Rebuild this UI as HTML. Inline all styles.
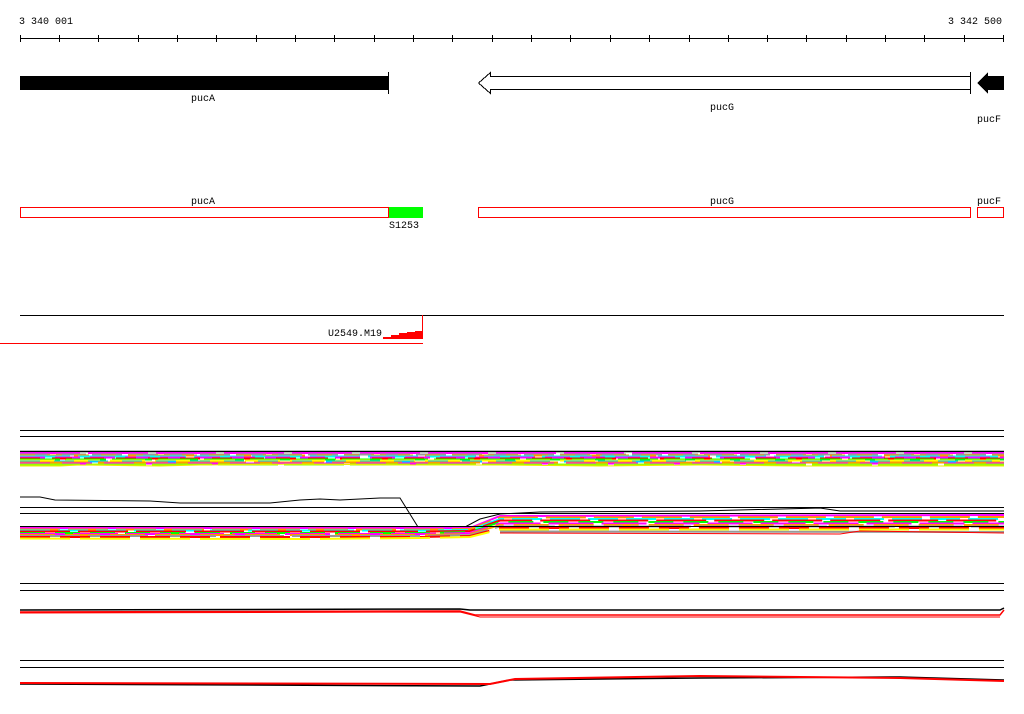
<!DOCTYPE html>
<html><head><meta charset="utf-8"><style>
html,body{margin:0;padding:0;background:#fff;width:1024px;height:714px;overflow:hidden}
svg{display:block}
text{font-family:"Liberation Mono","DejaVu Sans Mono",monospace;font-size:10px;fill:#000}
</style></head><body>
<svg width="1024" height="714" viewBox="0 0 1024 714" shape-rendering="crispEdges">
<text x="19" y="24">3 340 001</text>
<text x="1002" y="24" text-anchor="end">3 342 500</text>
<line x1="20" y1="38.5" x2="1004" y2="38.5" stroke="#000"/>
<g stroke="#000">
<line x1="20.5" y1="35" x2="20.5" y2="42"/><line x1="59.5" y1="35" x2="59.5" y2="42"/><line x1="98.5" y1="35" x2="98.5" y2="42"/><line x1="138.5" y1="35" x2="138.5" y2="42"/><line x1="177.5" y1="35" x2="177.5" y2="42"/><line x1="216.5" y1="35" x2="216.5" y2="42"/><line x1="256.5" y1="35" x2="256.5" y2="42"/><line x1="295.5" y1="35" x2="295.5" y2="42"/><line x1="334.5" y1="35" x2="334.5" y2="42"/><line x1="374.5" y1="35" x2="374.5" y2="42"/><line x1="413.5" y1="35" x2="413.5" y2="42"/><line x1="452.5" y1="35" x2="452.5" y2="42"/><line x1="492.5" y1="35" x2="492.5" y2="42"/><line x1="531.5" y1="35" x2="531.5" y2="42"/><line x1="570.5" y1="35" x2="570.5" y2="42"/><line x1="610.5" y1="35" x2="610.5" y2="42"/><line x1="649.5" y1="35" x2="649.5" y2="42"/><line x1="689.5" y1="35" x2="689.5" y2="42"/><line x1="728.5" y1="35" x2="728.5" y2="42"/><line x1="767.5" y1="35" x2="767.5" y2="42"/><line x1="806.5" y1="35" x2="806.5" y2="42"/><line x1="846.5" y1="35" x2="846.5" y2="42"/><line x1="885.5" y1="35" x2="885.5" y2="42"/><line x1="924.5" y1="35" x2="924.5" y2="42"/><line x1="964.5" y1="35" x2="964.5" y2="42"/><line x1="1003.5" y1="35" x2="1003.5" y2="42"/>
</g>
<rect x="20" y="76" width="368" height="14" fill="#000"/>
<line x1="388.5" y1="72" x2="388.5" y2="94" stroke="#000"/>
<text x="203" y="101" text-anchor="middle">pucA</text>
<path d="M478.5 83 L490.5 72.5 L490.5 76.5 L970.5 76.5 M478.5 83 L490.5 93.5 L490.5 89.5 L970.5 89.5" fill="none" stroke="#000"/>
<line x1="970.5" y1="72" x2="970.5" y2="94" stroke="#000"/>
<text x="722" y="110" text-anchor="middle">pucG</text>
<path d="M977 83 L988 72 L988 76 L1004 76 L1004 90 L988 90 L988 94 Z" fill="#000"/>
<text x="989" y="122" text-anchor="middle">pucF</text>
<text x="203" y="204" text-anchor="middle">pucA</text>
<text x="722" y="204" text-anchor="middle">pucG</text>
<text x="989" y="204" text-anchor="middle">pucF</text>
<rect x="20.5" y="207.5" width="368" height="10" fill="none" stroke="#f00"/>
<rect x="389" y="207" width="34" height="11" fill="#0f0"/>
<rect x="478.5" y="207.5" width="492" height="10" fill="none" stroke="#f00"/>
<rect x="977.5" y="207.5" width="26" height="10" fill="none" stroke="#f00"/>
<text x="389" y="228">S1253</text>
<line x1="20" y1="315.5" x2="1004" y2="315.5" stroke="#000"/>
<line x1="0" y1="343.5" x2="423" y2="343.5" stroke="#f00"/>
<line x1="422.5" y1="315" x2="422.5" y2="339" stroke="#f00"/>
<path d="M383 339 L423 339 L423 331 L415 331 L415 332 L407 332 L407 333 L399 333 L399 335 L391 335 L391 337 L383 337 Z" fill="#f00"/>
<text x="328" y="336">U2549.M19</text>
<g stroke="#000">
<line x1="20" y1="430.5" x2="1004" y2="430.5"/><line x1="20" y1="436.5" x2="1004" y2="436.5"/>
<line x1="20" y1="507.5" x2="1004" y2="507.5"/><line x1="20" y1="513.5" x2="1004" y2="513.5"/>
<line x1="20" y1="583.5" x2="1004" y2="583.5"/><line x1="20" y1="590.5" x2="1004" y2="590.5"/>
<line x1="20" y1="660.5" x2="1004" y2="660.5"/><line x1="20" y1="667.5" x2="1004" y2="667.5"/>
</g>
<g stroke-width="2" shape-rendering="auto">
<line x1="20" y1="451.5" x2="1004" y2="451.5" stroke="#000" stroke-width="1.5"/>
<line x1="20" y1="453" x2="1004" y2="453" stroke="#f0f" stroke-dasharray="60 8"/>
<line x1="20" y1="454.5" x2="1004" y2="454.5" stroke="#999" stroke-dasharray="30 6"/>
<line x1="20" y1="455.5" x2="1004" y2="455.5" stroke="#f90" stroke-dasharray="15 12"/>
<line x1="20" y1="456.5" x2="1004" y2="456.5" stroke="#0ff" stroke-dasharray="50 8"/>
<line x1="20" y1="457.5" x2="1004" y2="457.5" stroke="#f0f" stroke-dasharray="25 10"/>
<line x1="20" y1="458.5" x2="1004" y2="458.5" stroke="#f00" stroke-dasharray="20 12"/>
<line x1="20" y1="459.5" x2="1004" y2="459.5" stroke="#0f0" stroke-dasharray="40 6"/>
<line x1="20" y1="460.5" x2="1004" y2="460.5" stroke="#ff0" stroke-dasharray="35 10"/>
<line x1="20" y1="461.5" x2="1004" y2="461.5" stroke="#0cf" stroke-dasharray="20 14"/>
<line x1="20" y1="462.5" x2="1004" y2="462.5" stroke="#f90" stroke-dasharray="70 8"/>
<line x1="20" y1="463.5" x2="1004" y2="463.5" stroke="#f0f" stroke-dasharray="30 12"/>
<line x1="20" y1="464.5" x2="1004" y2="464.5" stroke="#9f0" stroke-dasharray="60 6"/>
<polyline points="20,466 60,466 80,465 160,466 200,465 300,464 400,465 500,465 600,466 700,465 800,466 900,466 1004,466" fill="none" stroke="#ee0" stroke-width="1"/>
</g>
<g shape-rendering="auto" fill="none">
<polyline points="20,497 40,497 55,500 150,501 180,503 230,503 270,503 300,500 320,499 340,500 380,498 400,498 418,527 465,527 480,519 500,514 540,512 700,511 820,508 840,511 1004,511" stroke="#000"/>
<g stroke-width="2">
<polyline points="20,528 420,528 470,528 500,516 1004,515" stroke="#f0f"/>
<polyline points="20,529.5 420,529.5 470,529 500,517.5 1004,517" stroke="#f90" stroke-dasharray="40 8"/>
<polyline points="20,530.5 420,530.5 470,530 500,519 1004,519" stroke="#0ff" stroke-dasharray="30 8"/>
<polyline points="20,531.5 420,531.5 470,531 500,520.5 1004,520.5" stroke="#f00" stroke-dasharray="50 8"/>
<polyline points="20,533 420,533 470,532 500,522 1004,522" stroke="#0f0" stroke-dasharray="25 10"/>
<polyline points="20,534 420,534 470,533 500,523.5 1004,523.5" stroke="#f0f" stroke-dasharray="45 8"/>
<polyline points="20,535 420,535 470,534 500,525 1004,525" stroke="#f90" stroke-dasharray="35 10"/>
<polyline points="20,536 420,536 470,535 500,526.5 1004,526.5" stroke="#999" stroke-dasharray="60 8"/>
<polyline points="20,537 420,537 470,536 500,528 1004,528" stroke="#f00" stroke-dasharray="30 10"/>
<polyline points="20,538.5 300,539 420,538 470,537 500,529.5 1004,529.5" stroke="#ff0" stroke-dasharray="50 10"/>
<polyline points="20,526.5 1004,526.5" stroke="#000" stroke-width="1"/>
<polyline points="500,531.5 1004,532" stroke="#999"/>
<polyline points="500,533 840,534 860,531 1004,533" stroke="#f00" stroke-width="1"/>
</g>
</g>
<g shape-rendering="auto" fill="none" stroke-width="1.5">
<polyline points="20,610 460,609 470,610 1000,610 1004,608" stroke="#000"/>
<polyline points="20,612 460,611 475,615 700,615 1000,615 1004,610" stroke="#f00"/>
<polyline points="20,613 460,612 480,617 1000,617" stroke="#f00" stroke-width="1"/>
</g>
<g shape-rendering="auto" fill="none" stroke-width="1.5">
<polyline points="20,684 480,686 510,680 700,678 900,677 1004,680" stroke="#000"/>
<polyline points="20,683 490,684 515,679 700,676 900,678 1004,681" stroke="#f00" stroke-width="2"/>
</g>
</svg>
</body></html>
